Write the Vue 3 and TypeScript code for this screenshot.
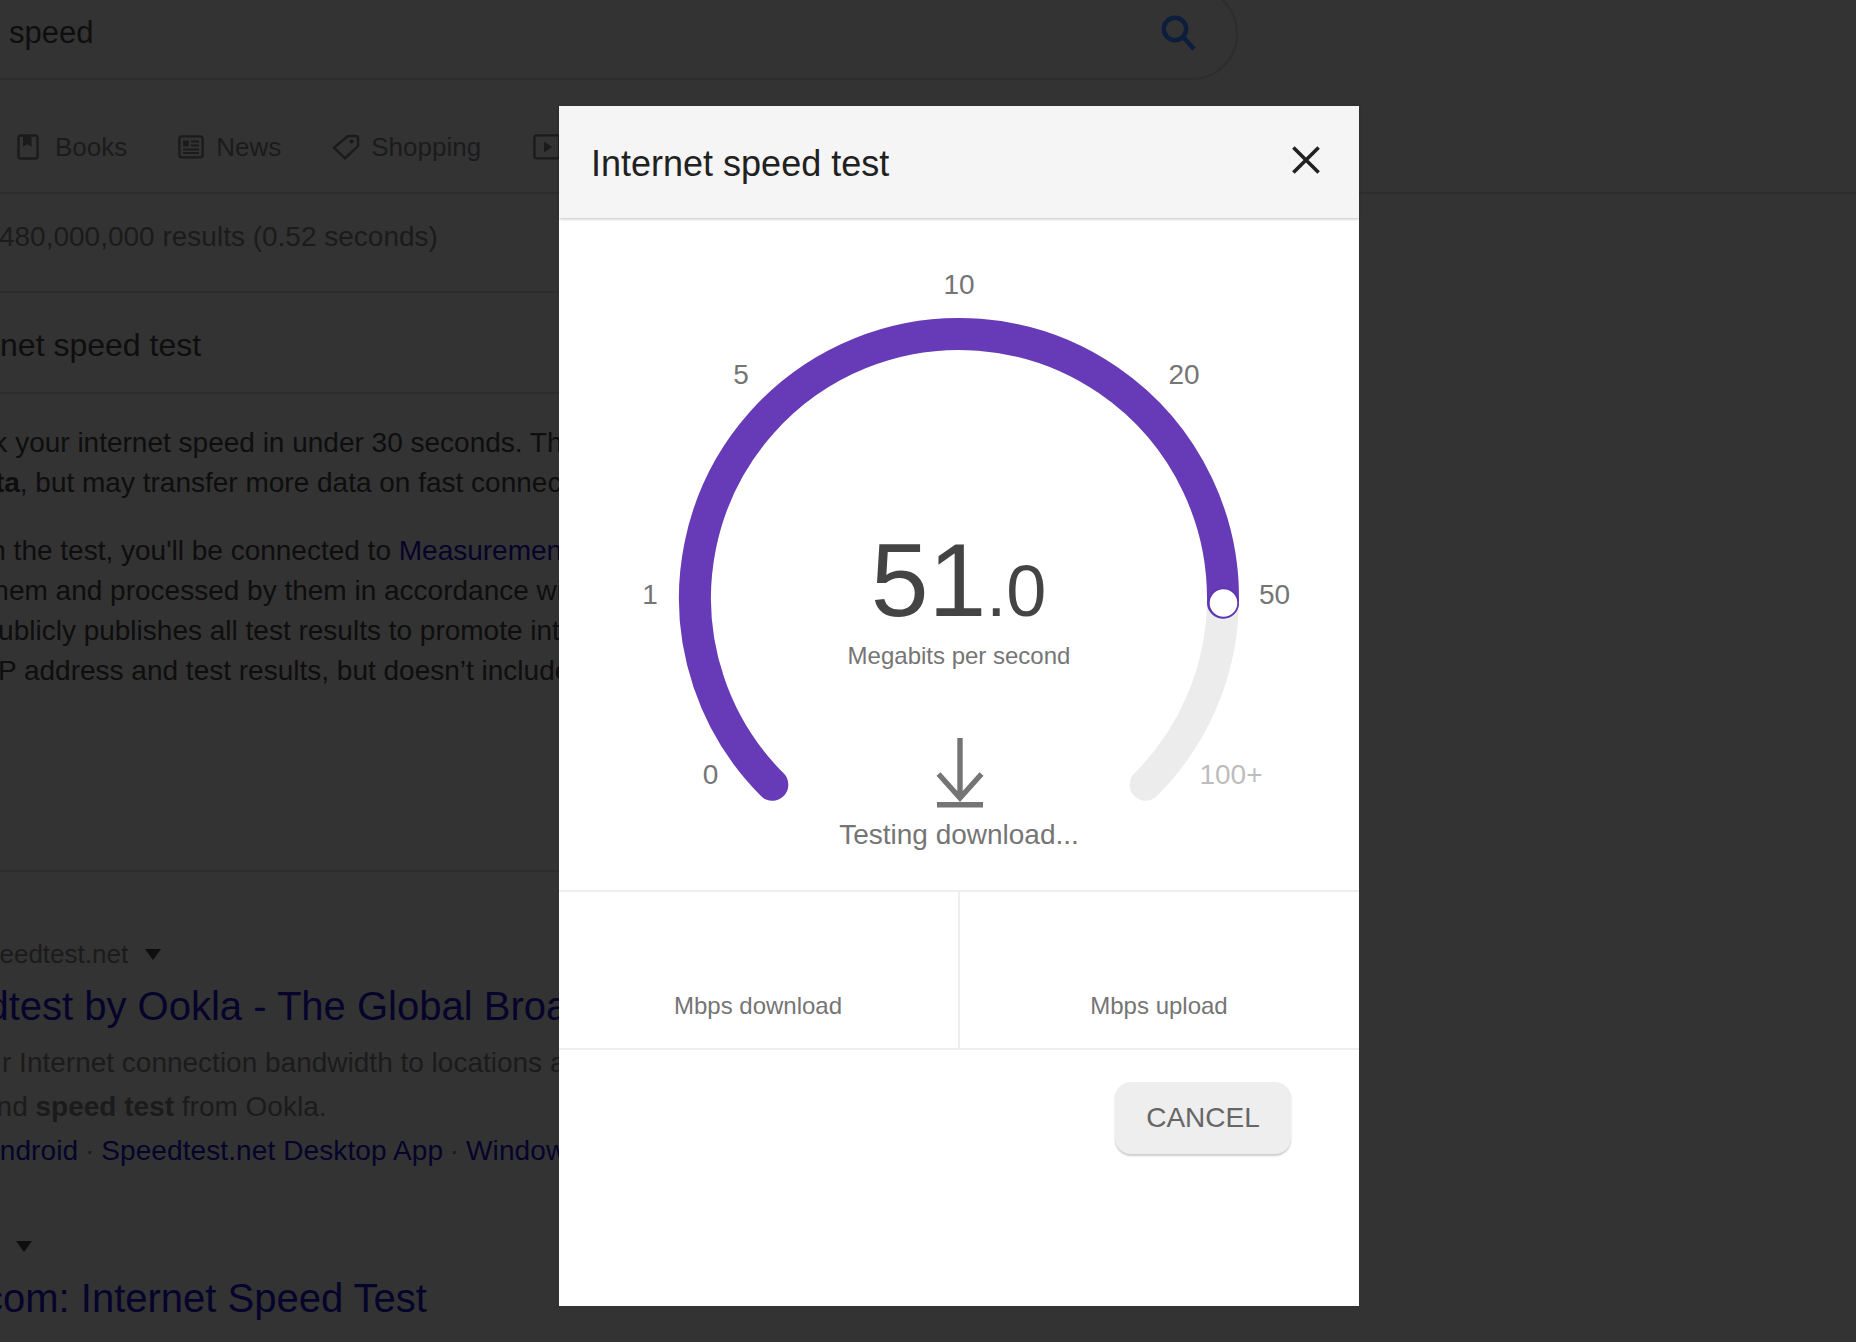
<script setup lang="ts">
interface Tick { label: string; x: number; y: number; muted?: boolean }

const ticks: Tick[] = [
  { label: '0', x: 151.6, y: 566 },
  { label: '1', x: 91, y: 386 },
  { label: '5', x: 182, y: 166 },
  { label: '10', x: 400, y: 76 },
  { label: '20', x: 625, y: 166 },
  { label: '50', x: 715.5, y: 386 },
  { label: '100+', x: 672, y: 566, muted: true },
]

const cx = 400
const cy = 380
const r = 264

function point(deg: number): string {
  const a = (deg * Math.PI) / 180
  return `${(cx + r * Math.cos(a)).toFixed(2)} ${(cy + r * Math.sin(a)).toFixed(2)}`
}

const trackPath = `M ${point(135)} A ${r} ${r} 0 1 1 ${point(45)}`
const valuePath = `M ${point(135)} A ${r} ${r} 0 1 1 ${point(1)}`
</script>

<template>
  <div class="page">
    <div class="backdrop">
      <div class="searchbar">
        <span class="query">speed</span>
        <svg class="search-icon" width="36" height="36" viewBox="0 0 36 36">
          <circle cx="15" cy="14" r="11.2" fill="none" stroke="#0c1d3e" stroke-width="4.4" />
          <path d="M23 22 L34 34" fill="none" stroke="#0c1d3e" stroke-width="4.6" />
        </svg>
      </div>

      <nav class="tabs">
        <div class="tab tab-books">
          <svg width="22" height="26" viewBox="0 0 22 26">
            <rect x="1.5" y="1.5" width="19" height="23" rx="2" fill="none" stroke="#1b1b1b" stroke-width="2.4" />
            <path d="M6 1.5 H14.5 V13 L10.2 10 L6 13 Z" fill="#1b1b1b" />
          </svg>
          <span>Books</span>
        </div>
        <div class="tab">
          <svg width="26" height="24" viewBox="0 0 26 24">
            <rect x="1.4" y="1.4" width="23.2" height="21" rx="2.4" fill="none" stroke="#1b1b1b" stroke-width="2.4" />
            <rect x="5" y="5.5" width="6" height="6" fill="#1b1b1b" />
            <path d="M13 6.5 H21 M13 10.5 H21 M5 14.5 H21 M5 18 H21" stroke="#1b1b1b" stroke-width="2" fill="none" />
          </svg>
          <span>News</span>
        </div>
        <div class="tab tab-shopping">
          <svg width="28" height="26" viewBox="0 0 28 26">
            <path d="M16 2 H24 A2 2 0 0 1 26 4 V12 L13 24.4 L2 13.6 Z" fill="none" stroke="#1b1b1b" stroke-width="2.4" stroke-linejoin="round" />
            <circle cx="19.6" cy="7.6" r="2" fill="#1b1b1b" />
          </svg>
          <span>Shopping</span>
        </div>
        <div class="tab">
          <svg width="28" height="26" viewBox="0 0 28 26">
            <rect x="1.4" y="1.4" width="25.2" height="23" rx="2.4" fill="none" stroke="#1b1b1b" stroke-width="2.4" />
            <path d="M11 7.5 L19 13 L11 18.5 Z" fill="#1b1b1b" />
          </svg>
        </div>
      </nav>

      <div class="result-stats">About 480,000,000 results (0.52 seconds)</div>
      <h2 class="panel-title">Internet speed test</h2>

      <section class="snippet">
        <p>Check your internet speed in under 30 seconds. The</p>
        <p><b>of data</b>, but may transfer more data on fast connec</p>
        <p class="para">To run the test, you'll be connected to <a>Measurement</a></p>
        <p>with them and processed by them in accordance with</p>
        <p>and publicly publishes all test results to promote int</p>
        <p>your IP address and test results, but doesn’t include</p>
      </section>

      <div class="cite cite-first">
        <span>speedtest.net</span>
        <i class="caret"></i>
      </div>
      <a class="result-title rt-first">Speedtest by Ookla - The Global Broad</a>
      <div class="desc">
        <p class="d1">r Internet connection bandwidth to locations a</p>
        <p class="d2">and <b>speed test</b> from Ookla.</p>
        <p class="d3"><a>Android</a><span class="sep">·</span><a>Speedtest.net Desktop App</a><span class="sep">·</span><a>Windows</a></p>
      </div>

      <div class="cite cite-second"><i class="caret"></i></div>
      <a class="result-title rt-second">com: Internet Speed Test</a>
    </div>

    <div class="modal">
      <header class="modal-head">
        <h1>Internet speed test</h1>
        <svg class="close" width="28" height="28" viewBox="0 0 28 28">
          <path d="M1.4 1.4 L26.6 26.6 M26.6 1.4 L1.4 26.6" stroke="#212121" stroke-width="3.6" fill="none" />
        </svg>
      </header>

      <svg class="gauge" width="800" height="672" viewBox="0 0 800 672">
        <path :d="trackPath" fill="none" stroke="#ececec" stroke-width="32" stroke-linecap="round" />
        <path :d="valuePath" fill="none" stroke="#673ab7" stroke-width="32" stroke-linecap="round" />
        <circle cx="664.5" cy="385" r="14.6" fill="#fff" stroke="#5e35b1" stroke-width="1.6" />
        <text
          v-for="t in ticks"
          :key="t.label"
          class="tick"
          :class="{ muted: t.muted }"
          :x="t.x"
          :y="t.y"
        >{{ t.label }}</text>
        <text class="speed" x="399.5" y="398"><tspan class="whole">51</tspan><tspan class="frac">.0</tspan></text>
        <text class="unit" x="400" y="446">Megabits per second</text>
        <path d="M401 520 V578 M379.5 556 L401 580 L422.5 556" fill="none" stroke="#757575" stroke-width="5.4" />
        <rect x="378" y="584" width="46" height="5.5" fill="#757575" />
        <text class="status" x="400" y="626">Testing download...</text>
      </svg>

      <div class="stats">
        <div class="stat stat-left">Mbps download</div>
        <div class="stat stat-right">Mbps upload</div>
      </div>

      <div class="actions">
        <button class="cancel" type="button">CANCEL</button>
      </div>
    </div>
  </div>
</template>

<style>
html, body { margin: 0; padding: 0; background: #333; }
</style>

<style scoped>
.page {
  position: relative;
  width: 1856px;
  height: 1342px;
  overflow: hidden;
  background: #333333;
  font-family: "Liberation Sans", Arial, sans-serif;
}

.backdrop { color: #0e0e0e; }

.searchbar {
  box-sizing: border-box;
  width: 1338px;
  height: 93px;
  margin: -13px 0 0 -100px;
  padding: 0 40px 0 107px;
  border: 2px solid #2d2d2d;
  border-radius: 46px;
  display: flex;
  align-items: center;
  justify-content: space-between;
}
.query { font-size: 31px; line-height: 36px; margin-top: -2px; }
.search-icon { margin-top: -2px; }

.tabs {
  box-sizing: border-box;
  height: 114px;
  padding: 53px 0 0 17px;
  border-bottom: 2px solid #2d2d2d;
  display: flex;
  gap: 51px;
  color: #1b1b1b;
  font-size: 26px;
  line-height: 28px;
}
.tab { display: flex; align-items: center; gap: 12px; height: 28px; }
.tab-books { gap: 16px; }
.tab-shopping { gap: 11px; margin-right: 1px; }

.result-stats {
  box-sizing: border-box;
  width: 800px;
  height: 99px;
  margin-left: -82px;
  padding-top: 27px;
  border-bottom: 2px solid #2d2d2d;
  color: #1b1b1b;
  font-size: 28px;
  line-height: 32px;
  white-space: nowrap;
}
.panel-title {
  box-sizing: border-box;
  width: 800px;
  height: 101px;
  margin: 0 0 0 -64px;
  padding-top: 34px;
  border-bottom: 2px solid #2d2d2d;
  font-size: 32px;
  font-weight: 400;
  line-height: 36px;
  white-space: nowrap;
}

.snippet {
  box-sizing: border-box;
  width: 800px;
  height: 478px;
  margin-left: -72px;
  padding-top: 29px;
  border-bottom: 2px solid #2d2d2d;
  font-size: 28px;
  line-height: 40px;
  white-space: nowrap;
}
.snippet p { margin: 0; }
.snippet .para { margin-top: 28px; }
.snippet a, .desc a, .result-title { color: #06042a; }

.cite {
  display: flex;
  align-items: center;
  height: 32px;
  color: #1b1b1b;
  font-size: 26px;
  line-height: 32px;
}
.cite-first { margin: 66px 0 0 -28px; gap: 17px; }
.cite-second { margin: 57px 0 0 16px; }
.caret {
  display: block;
  width: 0;
  height: 0;
  border-left: 8px solid transparent;
  border-right: 8px solid transparent;
  border-top: 11px solid #0e0e0e;
}
.result-title {
  display: block;
  margin-top: 12px;
  font-size: 40px;
  line-height: 48px;
  white-space: nowrap;
}
.rt-first { margin-left: -107px; }
.rt-second { margin-left: -17px; }

.desc {
  margin-top: 11px;
  color: #1b1b1b;
  font-size: 28px;
  line-height: 44px;
  white-space: nowrap;
}
.desc p { margin: 0; }
.d1 { margin-left: 2px !important; }
.d2 { margin-left: -19px !important; }
.d3 { margin-left: -19px !important; letter-spacing: 0.1px; }
.sep { display: inline-block; width: 23px; text-align: center; }

.modal {
  position: absolute;
  left: 559px;
  top: 106px;
  width: 800px;
  height: 1200px;
  background: #ffffff;
}
.modal-head {
  box-sizing: border-box;
  height: 112px;
  padding: 0 39px 0 32px;
  background: #f5f5f5;
  box-shadow: 0 1px 3px rgba(0, 0, 0, 0.25);
  display: flex;
  align-items: center;
  justify-content: space-between;
}
.modal-head h1 {
  margin: 4px 0 0;
  color: #212121;
  font-size: 36px;
  font-weight: 400;
  line-height: 40px;
}
.close { margin-bottom: 4px; }

.gauge { display: block; }
.tick { fill: #757575; font-size: 28px; text-anchor: middle; }
.tick.muted { fill: #bdbdbd; }
.speed { fill: #444444; text-anchor: middle; }
.whole { font-size: 104px; }
.frac { font-size: 72px; }
.unit { fill: #757575; font-size: 24px; text-anchor: middle; }
.status { fill: #757575; font-size: 28px; text-anchor: middle; }

.stats {
  box-sizing: border-box;
  height: 160px;
  border-top: 2px solid #eeeeee;
  border-bottom: 2px solid #eeeeee;
  display: grid;
  grid-template-columns: 399px 1fr;
}
.stat {
  display: flex;
  align-items: flex-end;
  justify-content: center;
  padding-bottom: 28px;
  color: #757575;
  font-size: 24px;
  line-height: 28px;
}
.stat-left { padding-right: 1px; }
.stat-right { padding-right: 1px; border-left: 2px solid #eeeeee; }

.actions {
  display: flex;
  justify-content: flex-end;
  padding: 32px 68px 0 0;
}
.cancel {
  width: 176px;
  height: 72px;
  border: 0;
  border-radius: 16px;
  background: #eeeeee;
  box-shadow: 0 2px 2px rgba(0, 0, 0, 0.2);
  color: #666666;
  font-family: inherit;
  font-size: 28px;
}
</style>
